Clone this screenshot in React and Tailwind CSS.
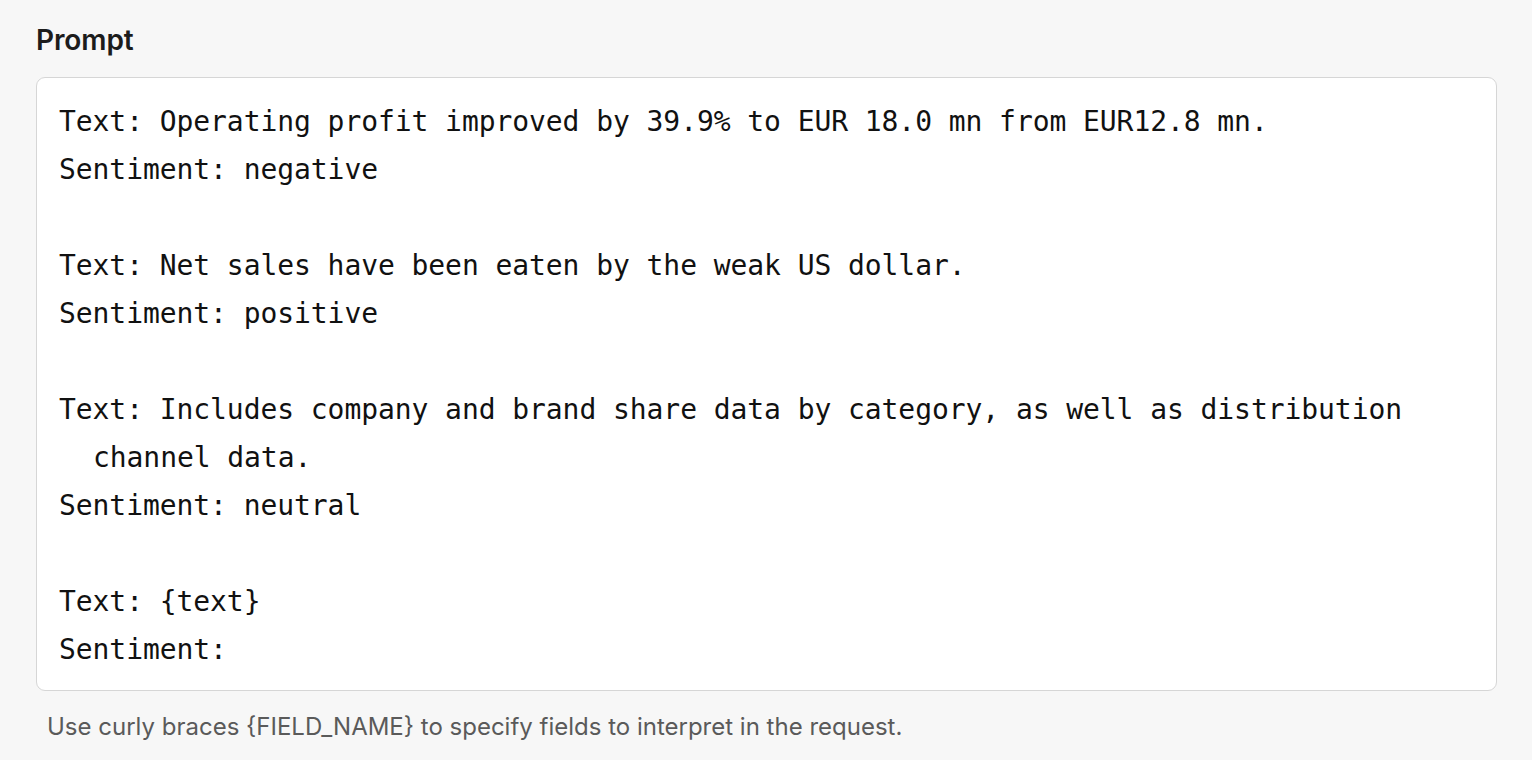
const lines = [
  { text: "Text: Operating profit improved by 39.9% to EUR 18.0 mn from EUR12.8 mn." },
  { text: "Sentiment: negative" },
  { text: "" },
  { text: "Text: Net sales have been eaten by the weak US dollar." },
  { text: "Sentiment: positive" },
  { text: "" },
  { text: "Text: Includes company and brand share data by category, as well as distribution" },
  { text: "channel data.", indent: true },
  { text: "Sentiment: neutral" },
  { text: "" },
  { text: "Text: {text}" },
  { text: "Sentiment:" },
];

function PromptField() {
  return (
    <div className="px-[36px] pt-[24px]">
      <label className="block text-[28px] leading-[32px] font-semibold text-[#1c1c1c] font-['Inter',sans-serif] tracking-[-0.1px]">
        Prompt
      </label>

      <div className="mt-[21px] rounded-[9px] border border-[#d6d6d6] bg-white pl-[22px] pr-[20px] pt-[20px] pb-[16px] w-[1461px]">
        <div className="font-['DejaVu_Sans_Mono',monospace] text-[28px] leading-[48px] tracking-[-0.07px] text-[#111] whitespace-pre">
          {lines.map((line, i) => (
            <div key={i} className={line.indent ? "h-[48px] pl-[34px]" : "h-[48px]"}>
              {line.text}
            </div>
          ))}
        </div>
      </div>

      <p className="mt-[22px] pl-[11px] text-[24px] leading-[28px] text-[#5a5a5a] font-['Inter',sans-serif]">
        Use curly braces {"{FIELD_NAME}"} to specify fields to interpret in the request.
      </p>
    </div>
  );
}

export default function App() {
  return (
    <div className="min-h-[760px] w-full bg-[#f7f7f7]">
      <PromptField />
    </div>
  );
}
